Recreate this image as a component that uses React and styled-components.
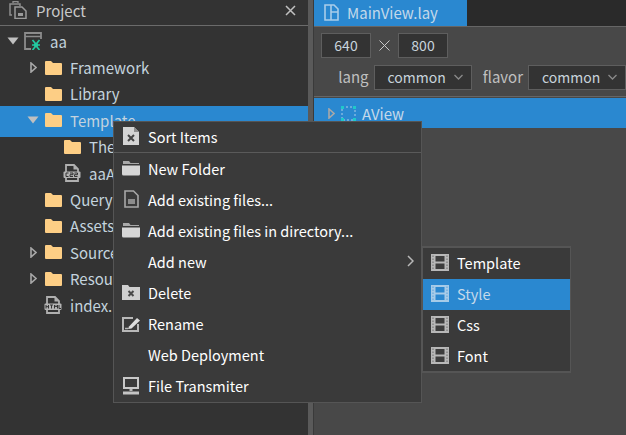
import React from 'react';
import styled, { createGlobalStyle } from 'styled-components';

const Global = createGlobalStyle`
  html, body { margin: 0; padding: 0; background: #484848; }
  body { font-family: "Noto Sans CJK KR", "Noto Sans", sans-serif; overflow: hidden; }
`;

const Shell = styled.div`
  position: relative;
  width: 626px;
  height: 435px;
  overflow: hidden;
  display: flex;
  font-size: 15px;
  color: #c4d3de;
`;

const LeftPanel = styled.div`
  width: 308px;
  background: #333333;
  display: flex;
  flex-direction: column;
`;

const PanelHeader = styled.div`
  height: 20px;
  border-bottom: 1px solid #6b6b6b;
  display: flex;
  align-items: center;
  padding: 0 12px 5px 9px;
  gap: 9px;
  color: #c8c8c8;
  font-size: 15px;
  svg { flex: none; }
`;

const Close = styled.span`
  margin-left: auto;
  display: flex;
`;

const Tree = styled.div`
  padding-top: 2px;
  display: flex;
  flex-direction: column;
`;

const Row = styled.div`
  height: 26.4px;
  display: flex;
  align-items: center;
  padding-left: ${(p) => p.$indent}px;
  background: ${(p) => (p.$active ? '#2a88d0' : 'transparent')};
  box-shadow: ${(p) => (p.$active ? '0 -1px 0 #2a88d0, 0 3px 0 #2a88d0' : 'none')};
  white-space: nowrap;
`;

const Arrow = styled.span`
  width: 14px;
  height: 14px;
  flex: none;
  display: flex;
  align-items: center;
  justify-content: center;
  margin-right: 4px;
`;

const RowIcon = styled.span`
  width: 18px;
  height: 18px;
  flex: none;
  display: flex;
  align-items: center;
  justify-content: center;
  margin-right: 8px;
`;

const Divider = styled.div`
  width: 6px;
  background: #5a5a5a;
  border-right: 1px solid #3a3a3a;
  box-sizing: border-box;
`;

const RightPanel = styled.div`
  flex: 1;
  min-width: 0;
  background: #484848;
  display: flex;
  flex-direction: column;
`;

const TabBar = styled.div`
  height: 26px;
  background: #2a2a2a;
  display: flex;
`;

const Tab = styled.div`
  width: 153px;
  background: #2a88d0;
  display: flex;
  align-items: center;
  gap: 8px;
  padding: 0 0 1px 10px;
  box-sizing: border-box;
  color: #c4d9ea;
  font-size: 15px;
`;

const Toolbar = styled.div`
  height: 71px;
  box-sizing: border-box;
  border-top: 1px solid #666;
  border-bottom: 1px solid #666;
  padding: 6px 0 0 7px;
  display: flex;
  flex-direction: column;
  gap: 7px;
`;

const SizeRow = styled.div`
  display: flex;
  align-items: center;
`;

const SizeBox = styled.div`
  width: 50px;
  height: 25px;
  box-sizing: border-box;
  background: #333;
  border: 1px solid #5e5e5e;
  padding-bottom: 2px;
  display: flex;
  align-items: center;
  justify-content: center;
  font-size: 14px;
  color: #c8d4dc;
`;

const Times = styled.span`
  width: 27px;
  display: flex;
  justify-content: center;
`;

const FilterRow = styled.div`
  display: flex;
  align-items: center;
  white-space: nowrap;
`;

const Label = styled.span`
  width: ${(p) => p.$w}px;
  text-align: right;
  padding: 0 5px 2px 0;
  box-sizing: border-box;
  color: #c0c0c0;
  font-size: 15px;
`;

const Select = styled.div`
  flex: none;
  width: ${(p) => p.$w}px;
  height: 25px;
  box-sizing: border-box;
  background: #333;
  border: 1px solid #5e5e5e;
  display: flex;
  align-items: center;
  padding: 0 0 2px 13px;
  gap: 8px;
  font-size: 14px;
  color: #c8d4dc;
`;

const ViewRow = styled.div`
  height: 30px;
  margin-top: 1px;
  background: #2a88d0;
  display: flex;
  align-items: center;
  padding-left: 14px;
  gap: 6px;
  color: #c4d9ea;
  font-size: 15px;
`;

const Menu = styled.div`
  position: absolute;
  left: ${(p) => p.$x}px;
  top: ${(p) => p.$y}px;
  width: ${(p) => p.$w}px;
  box-sizing: border-box;
  background: #3a3a3a;
  border: solid #555;
  border-width: ${(p) => p.$border};
  color: #fff;
  font-size: 14.5px;
`;

const Item = styled.div`
  height: ${(p) => p.$h}px;
  box-sizing: border-box;
  display: flex;
  align-items: center;
  padding: 0 0 ${(p) => p.$lift}px 7px;
  background: ${(p) => (p.$active ? '#2a88d0' : 'transparent')};
  color: ${(p) => (p.$active ? '#c4d9ea' : '#fff')};
  white-space: nowrap;
`;

const ItemIcon = styled.span`
  width: 20px;
  height: 20px;
  flex: none;
  display: flex;
  align-items: center;
  justify-content: center;
  margin-right: 7px;
`;

const Separator = styled.div`
  height: 1px;
  background: #5a5a5a;
`;

const SubArrow = styled.span`
  margin-left: auto;
  margin-right: 7px;
  display: flex;
`;

const ArrowDown = () => (
  <svg width="12" height="8" viewBox="0 0 12 8"><path d="M0.5 0.500h11L6 7.500z" fill="#c0c0c0" /></svg>
);
const ArrowRight = () => (
  <svg width="7" height="11" viewBox="0 0 7 11"><path d="M1 1l5 4.500-5 4.500z" fill="none" stroke="#a8a8a8" strokeWidth="1.600" /></svg>
);
const Folder = () => (
  <svg width="17" height="14" viewBox="0 0 17 14"><path d="M0 1Q0 0 1 0h5l2 2h8q1 0 1 1V13q0 1-1 1H1q-1 0-1-1z" fill="#fdce85" /></svg>
);
const CodeFile = ({ tag }) => (
  <svg width="18" height="18" viewBox="0 0 18 18">
    <path d="M3 8V1h8l4 4v3M3 14v3h12v-3" fill="none" stroke="#b0b0b0" strokeWidth="1.800" />
    <path d="M10.500 1v4.500H15" fill="#b0b0b0" />
    <rect x="0.500" y="7.500" width="17" height="6.500" rx="1" fill="#b4b4b4" />
    <path d={tag} stroke="#333" strokeWidth="1" fill="none" />
  </svg>
);
const SortIcon = () => (
  <svg width="16" height="18" viewBox="0 0 16 18">
    <path d="M0 0h11l5 5v13H0z" fill="#d4d4d4" />
    <path d="M11 0v5h5" fill="#8e8e8e" />
    <path d="M5 8l6 6M11 8l-6 6" stroke="#444" strokeWidth="2" />
  </svg>
);
const OpenFolder = () => (
  <svg width="18" height="16" viewBox="0 0 18 16">
    <path d="M1 3V1h6l1.500 2H17v1H1z" fill="#a9a9a9" />
    <path d="M0 5.500h18V14q0 1.500-1.500 1.500h-15Q0 15.500 0 14z" fill="#d6d6d6" />
  </svg>
);
const PageIcon = () => (
  <svg width="15" height="18" viewBox="0 0 15 18">
    <path d="M1 1h8.500L14 5.500V17H1z" fill="none" stroke="#a8a8a8" strokeWidth="1.600" />
    <rect x="4" y="9" width="7" height="5" fill="#8c8c8c" />
  </svg>
);
const DeleteIcon = () => (
  <svg width="18" height="15" viewBox="0 0 18 15">
    <path d="M0 0h6l1.500 2H18v13H0z" fill="#d0d0d0" />
    <path d="M6.500 6l5 5M11.500 6l-5 5" stroke="#4a4a4a" strokeWidth="2" />
  </svg>
);
const RenameIcon = () => (
  <svg width="18" height="16" viewBox="0 0 18 16">
    <path d="M11 2H1V15h15V8" fill="none" stroke="#b8b8b8" strokeWidth="2" />
    <path d="M7 10.500l8-8.500 3 2.500-8.500 8L6 13z" fill="#dcdcdc" />
    <path d="M3 12.500h3" stroke="#b8b8b8" strokeWidth="1.500" />
  </svg>
);
const MonitorIcon = () => (
  <svg width="16" height="18" viewBox="0 0 16 18">
    <rect x="1" y="1" width="14" height="10" fill="none" stroke="#c8c8c8" strokeWidth="2" />
    <rect x="6.500" y="12" width="3" height="2" fill="#b8b8b8" />
    <rect x="0" y="14.500" width="16" height="3" fill="#c4c4c4" />
  </svg>
);
const FilmIcon = ({ pane, frame }) => (
  <svg width="18" height="17" viewBox="0 0 18 17">
    <rect width="18" height="17" fill={frame} />
    <rect x="4.500" y="2" width="9" height="5.500" fill={pane} />
    <rect x="4.500" y="9.500" width="9" height="5.500" fill={pane} />
    <path d="M2 1.500v14M16 1.500v14" stroke={pane} strokeOpacity="0.500" strokeWidth="1.200" strokeDasharray="1.500 1.500" />
  </svg>
);
const ProjectIcon = () => (
  <svg width="18" height="18" viewBox="0 0 18 18">
    <path d="M3 14H1V3h10v2" fill="none" stroke="#8f8f8f" strokeWidth="1.500" />
    <path d="M4 2V0.500h5V2" fill="none" stroke="#8f8f8f" strokeWidth="1.300" />
    <path d="M6 6h7l4 4v7.500H6z" fill="none" stroke="#9a9a9a" strokeWidth="1.500" />
    <rect x="9" y="12" width="5" height="3" fill="#9a9a9a" />
  </svg>
);
const AppIcon = () => (
  <svg width="18" height="18" viewBox="0 0 18 18">
    <path d="M7 17H1V1h16v6" fill="none" stroke="#8c8c8c" strokeWidth="1.800" />
    <path d="M1 4.500h16" stroke="#8c8c8c" strokeWidth="1.500" />
    <rect x="10" y="10.500" width="4" height="5" rx="1.500" fill="#23c7a0" />
    <path d="M8.500 8l2.500 3M15.500 8L13 11M8 13h8M8.500 18l2.500-3M15.500 18L13 15" fill="none" stroke="#23c7a0" strokeWidth="1.700" />
  </svg>
);
const LayoutIcon = () => (
  <svg width="15" height="17" viewBox="0 0 15 17">
    <path d="M1 1h9l4 4v11H1zM7 1v15M7 8h7" fill="none" stroke="#a9cde9" strokeWidth="1.600" />
  </svg>
);
const CloseIcon = () => (
  <svg width="11" height="11" viewBox="0 0 11 11"><path d="M1 1l9 9M10 1l-9 9" stroke="#c0c0c0" strokeWidth="1.500" /></svg>
);
const Chevron = () => (
  <svg width="9" height="6" viewBox="0 0 9 6"><path d="M.5 1l4 4 4-4" fill="none" stroke="#8a8a8a" strokeWidth="1.300" /></svg>
);
const DashedBox = () => (
  <svg width="15" height="15" viewBox="0 0 15 15">
    <rect x="1" y="1" width="13" height="13" fill="none" stroke="#a9cde9" strokeWidth="1" strokeDasharray="2 2" />
    <path d="M0 0h3v3H0zM12 0h3v3h-3zM0 12h3v3H0zM12 12h3v3h-3z" fill="#1fc9c9" />
  </svg>
);

const cssTag = 'M3 9h2.500M3 9v3.500h2.500M7 9h3v1.700H7v1.800h3M11.500 9h3v1.700h-3v1.800h3';
const htmlTag = 'M2 9v3.500M4.500 9v3.500M2 10.700h2.500M6 9h3M7.500 9v3.500M10.500 12.500V9l1.500 2 1.500-2v3.500M15 9v3.500h2';

const tree = [
  { label: 'aa', indent: 6, arrow: 'down', icon: <AppIcon /> },
  { label: 'Framework', indent: 26, arrow: 'right', icon: <Folder /> },
  { label: 'Library', indent: 26, icon: <Folder /> },
  { label: 'Template', indent: 26, arrow: 'down', icon: <Folder />, active: true },
  { label: 'Theme', indent: 45, icon: <Folder /> },
  { label: 'aaApp.css', indent: 45, icon: <CodeFile tag={cssTag} /> },
  { label: 'Query', indent: 26, icon: <Folder /> },
  { label: 'Assets', indent: 26, icon: <Folder /> },
  { label: 'Source', indent: 26, arrow: 'right', icon: <Folder /> },
  { label: 'Resource', indent: 26, arrow: 'right', icon: <Folder /> },
  { label: 'index.html', indent: 26, icon: <CodeFile tag={htmlTag} /> },
];

const menuRest = [
  { label: 'New Folder', icon: <OpenFolder /> },
  { label: 'Add existing files...', icon: <PageIcon /> },
  { label: 'Add existing files in directory...', icon: <OpenFolder /> },
  { label: 'Add new', more: true },
  { label: 'Delete', icon: <DeleteIcon /> },
  { label: 'Rename', icon: <RenameIcon /> },
  { label: 'Web Deployment' },
  { label: 'File Transmiter', icon: <MonitorIcon /> },
];
const subMenu = ['Template', 'Style', 'Css', 'Font'];

const MenuItem = ({ item, h, lift }) => (
  <Item $h={h} $lift={lift}>
    <ItemIcon>{item.icon}</ItemIcon>
    {item.label}
    {item.more && (
      <SubArrow>
        <svg width="7" height="12" viewBox="0 0 7 12"><path d="M1 1l5 5-5 5" fill="none" stroke="#b8b8b8" strokeWidth="1.500" /></svg>
      </SubArrow>
    )}
  </Item>
);

export default function App() {
  return (
    <Shell>
      <Global />
      <LeftPanel>
        <PanelHeader>
          <ProjectIcon />
          Project
          <Close><CloseIcon /></Close>
        </PanelHeader>
        <Tree>
          {tree.map((row) => (
            <Row key={row.label} $indent={row.indent} $active={row.active}>
              <Arrow>
                {row.arrow === 'down' && <ArrowDown />}
                {row.arrow === 'right' && <ArrowRight />}
              </Arrow>
              <RowIcon>{row.icon}</RowIcon>
              {row.label}
            </Row>
          ))}
        </Tree>
      </LeftPanel>
      <Divider />
      <RightPanel>
        <TabBar>
          <Tab><LayoutIcon />MainView.lay</Tab>
        </TabBar>
        <Toolbar>
          <SizeRow>
            <SizeBox>640</SizeBox>
            <Times>
              <svg width="11" height="11" viewBox="0 0 11 11"><path d="M.5.5l10 10M10.500.5l-10 10" stroke="#c8c8c8" strokeWidth="1" /></svg>
            </Times>
            <SizeBox>800</SizeBox>
          </SizeRow>
          <FilterRow>
            <Label $w={53}>lang</Label>
            <Select $w={98}>common<Chevron /></Select>
            <Label $w={57}>flavor</Label>
            <Select $w={98}>common<Chevron /></Select>
          </FilterRow>
        </Toolbar>
        <ViewRow>
          <ArrowRight />
          <DashedBox />
          AView
        </ViewRow>
      </RightPanel>
      <Menu $x={113} $y={121} $w={309} $border="1px">
        <MenuItem h={30} lift={2} item={{ label: 'Sort Items', icon: <SortIcon /> }} />
        <Separator />
        {menuRest.map((item) => <MenuItem key={item.label} h={31.1} lift={1} item={item} />)}
      </Menu>
      <Menu $x={422} $y={246} $w={149} $border="2px 1px">
        {subMenu.map((label) => {
          const active = label === 'Style';
          return (
            <Item key={label} $h={30.75} $lift={1} $active={active}>
              <ItemIcon>
                <FilmIcon frame={active ? '#a6cbe8' : '#b8b8b8'} pane={active ? '#2a88d0' : '#3d3d3d'} />
              </ItemIcon>
              {label}
            </Item>
          );
        })}
      </Menu>
    </Shell>
  );
}
